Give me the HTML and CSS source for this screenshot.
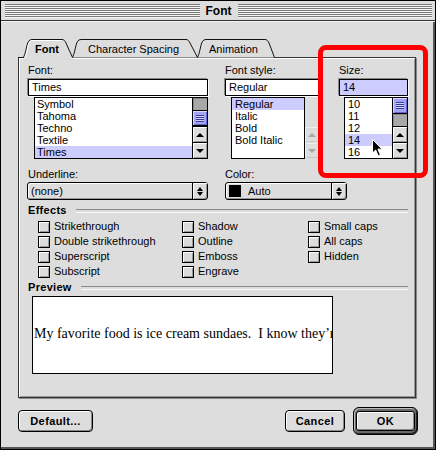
FILE: index.html
```html
<!DOCTYPE html>
<html>
<head>
<meta charset="utf-8">
<title>Font</title>
<link rel="stylesheet" href="styles.css">
</head>
<body>
<div class="window">
  <div class="titlebar">
    <div class="stripes"></div>
    <div class="title">Font</div>
    <div class="stripes"></div>
  </div>

  <div class="tabs">
    <svg class="tab-shapes" width="262" height="21" viewBox="0 0 262 21">
      <path class="tab-fill" d="M179.5,18.5 C183.5,10 182,0.5 188,0.5 L247,0.5 C249,0.5 250,2 251,4 L256.5,18.5 Z"/>
      <path class="tab-line" d="M179.5,18.5 C183.5,10 182,0.5 188,0.5 L247,0.5 C249,0.5 250,2 251,4 L256.5,18.5"/>
      <path class="tab-fill" d="M54.5,18.5 C58.5,10 57,0.5 63,0.5 L168,0.5 C170,0.5 171,2 172,4 L179.5,18.5 Z"/>
      <path class="tab-line" d="M54.5,18.5 C58.5,10 57,0.5 63,0.5 L168,0.5 C170,0.5 171,2 172,4 L179.5,18.5"/>
      <path class="tab-fill" d="M5.5,19.5 L5.5,18.5 C9.5,10 8,0.5 14,0.5 L44,0.5 C46,0.5 47,2 48,4 L54.5,18.5 L54.5,20 L5.5,20 Z"/>
      <path class="tab-line" d="M0,18.5 L5.5,18.5 C9.5,10 8,0.5 14,0.5 L44,0.5 C46,0.5 47,2 48,4 L54.5,18.5"/>
      <path class="tab-hi" d="M7,18.5 C10.5,10 9.5,1.5 14,1.5 L43.5,1.5"/>
    </svg>
    <span class="tab-label t-font">Font</span>
    <span class="tab-label t-char">Character Spacing</span>
    <span class="tab-label t-anim">Animation</span>
  </div>

  <div class="panel">
    <div class="top-row">
      <div class="col col-font">
        <div class="label">Font:</div>
        <div class="field">Times</div>
        <div class="list list-font">
          <div class="items">
            <div class="item">Symbol</div>
            <div class="item">Tahoma</div>
            <div class="item">Techno</div>
            <div class="item">Textile</div>
            <div class="item sel">Times</div>
          </div>
          <div class="scroll">
            <div class="track t12"></div>
            <div class="thumb"><span class="grip"></span></div>
            <div class="arrow up"><span class="tri-up"></span></div>
            <div class="arrow down"><span class="tri-down"></span></div>
          </div>
        </div>
      </div>

      <div class="col col-style">
        <div class="label">Font style:</div>
        <div class="field">Regular</div>
        <div class="list list-style">
          <div class="items">
            <div class="item sel">Regular</div>
            <div class="item">Italic</div>
            <div class="item">Bold</div>
            <div class="item">Bold Italic</div>
          </div>
          <div class="scroll disabled">
            <div class="track t28"></div>
            <div class="arrow up"><span class="tri-up"></span></div>
            <div class="arrow down"><span class="tri-down"></span></div>
          </div>
        </div>
      </div>

      <div class="col col-size">
        <div class="label">Size:</div>
        <div class="field field-sel">14</div>
        <div class="list list-size">
          <div class="items">
            <div class="item">10</div>
            <div class="item">11</div>
            <div class="item">12</div>
            <div class="item sel">14</div>
            <div class="item">16</div>
          </div>
          <div class="scroll">
            <div class="thumb"><span class="grip"></span></div>
            <div class="track t12"></div>
            <div class="arrow up"><span class="tri-up"></span></div>
            <div class="arrow down"><span class="tri-down"></span></div>
          </div>
          <svg class="cursor" width="12" height="18" viewBox="0 0 12 18">
            <path d="M0.5,0.5 L0.5,14 L3.7,11 L6.2,16.8 L8.4,15.8 L5.9,10.2 L10,10.2 Z" fill="#000" stroke="#fff" stroke-width="1"/>
          </svg>
        </div>
      </div>
    </div>

    <div class="mid-row">
      <div class="col col-font">
        <div class="label">Underline:</div>
        <div class="popup popup-under">
          <span class="popup-text">(none)</span>
          <span class="popup-arrows"><span class="pa-up"></span><span class="pa-down"></span></span>
        </div>
      </div>
      <div class="col col-color">
        <div class="label">Color:</div>
        <div class="popup popup-color">
          <span class="swatch"></span>
          <span class="popup-text">Auto</span>
          <span class="popup-arrows"><span class="pa-up"></span><span class="pa-down"></span></span>
        </div>
      </div>
    </div>

    <div class="group-head">Effects</div>
    <div class="checks">
      <div class="check"><span class="box"></span>Strikethrough</div>
      <div class="check"><span class="box"></span>Double strikethrough</div>
      <div class="check"><span class="box"></span>Superscript</div>
      <div class="check"><span class="box"></span>Subscript</div>
      <div class="check"><span class="box"></span>Shadow</div>
      <div class="check"><span class="box"></span>Outline</div>
      <div class="check"><span class="box"></span>Emboss</div>
      <div class="check"><span class="box"></span>Engrave</div>
      <div class="check"><span class="box"></span>Small caps</div>
      <div class="check"><span class="box"></span>All caps</div>
      <div class="check"><span class="box"></span>Hidden</div>
    </div>

    <div class="group-head">Preview</div>
    <div class="preview">
      <span class="preview-text">My favorite food is ice cream sundaes.&nbsp; I know they’re</span>
    </div>
  </div>

  <div class="buttons">
    <div class="btn btn-default">Default...</div>
    <div class="spacer"></div>
    <div class="btn btn-cancel">Cancel</div>
    <div class="ok-ring"><div class="btn btn-ok">OK</div></div>
  </div>

  <div class="highlight-box"></div>
</div>
</body>
</html>
```

FILE: styles.css
```css
* { box-sizing: border-box; }
html, body { margin: 0; padding: 0; background: #ffffff; }
body {
  font-family: "Liberation Sans", Arial, sans-serif;
  font-size: 11px;
  color: #000;
}

.window {
  position: relative;
  width: 436px;
  height: 450px;
  border: 1px solid #000;
  background: #dddddd;
  overflow: hidden;
  box-shadow: inset -2px -2px 0 #555;
}

/* title bar */
.titlebar {
  display: flex;
  height: 20px;
  padding: 3px 3px 2px 4px;
  border-bottom: 1px solid #333;
  box-shadow: 0 1px 0 #f4f4f4;
  background: #dddddd;
}
.stripes {
  flex: 1;
  background: repeating-linear-gradient(to bottom, #7a7a7a 0 1px, #f6f6f6 1px 2px);
  border-bottom: 1px solid #f6f6f6;
}
.title {
  width: 38px;
  text-align: center;
  font-weight: bold;
  font-size: 12px;
  line-height: 14px;
}

/* tabs */
.tabs {
  position: relative;
  display: flex;
  height: 18px;
  margin: 18px 0 0 17px;
}
.tab-shapes {
  position: absolute;
  left: 0;
  top: 0;
  overflow: visible;
  z-index: 1;
}
.tab-fill { fill: #dddddd; stroke: none; }
.tab-line { fill: none; stroke: #111; stroke-width: 1; }
.tab-hi { fill: none; stroke: #fff; stroke-width: 1; }
.tab-label {
  position: relative;
  z-index: 2;
  line-height: 18px;
  padding-top: 1px;
  white-space: nowrap;
}
.t-font { width: 70px; padding-left: 17px; font-weight: bold; }
.t-char { width: 121px; }
.t-anim { width: 70px; }

/* panel */
.panel {
  width: 398px;
  height: 341px;
  margin-left: 17px;
  border: 1px solid #333;
  box-shadow: inset 1px 1px 0 #fff, inset -1px -1px 0 #999, 1px 1px 0 #888;
  padding: 6px 7px 0 9px;
}

.top-row, .mid-row { display: flex; }
.col { display: flex; flex-direction: column; }
.col-font { width: 180px; }
.col-style { width: 95px; margin-left: 17px; }
.col-size { width: 69px; margin-left: 19px; }
.col-color { width: 122px; margin-left: 17px; }

.label {
  line-height: 13px;
  height: 13px;
  margin-bottom: 2px;
  white-space: nowrap;
}

.field {
  height: 17px;
  border: 1px solid #000;
  background: #fff;
  padding: 0 3px;
  line-height: 15px;
  box-shadow: -1px -1px 0 #888, 1px 1px 0 #fff;
}
.field-sel { background: #ccccff; }

.list {
  position: relative;
  display: flex;
  height: 62px;
  margin-top: 1px;
}
.list-font { margin-left: 6px; }
.list-style { margin-left: 6px; }
.list-size { margin-left: 5px; }

.items {
  flex: 1;
  border: 1px solid #000;
  background: #fff;
  overflow: hidden;
}
.item {
  height: 12px;
  line-height: 12px;
  padding-left: 2px;
  white-space: nowrap;
}
.list-style .item, .list-size .item { padding-left: 3px; }
.item.sel { background: #ccccff; }

.scroll {
  width: 15px;
  border: 1px solid #000;
  border-left: none;
  display: flex;
  flex-direction: column;
  background: #aaaaaa;
}
.track { background: #a8a8a8; box-shadow: inset 1px 1px 0 #888; }
.t12 { height: 12px; }
.t28 { height: 28px; }
.thumb {
  height: 16px;
  background: #a3a3f5;
  border-top: 1px solid #000;
  border-bottom: 1px solid #000;
  box-shadow: inset 1px 1px 0 #d8d8ff, inset -1px -1px 0 #6666cc;
  display: flex;
  align-items: center;
  justify-content: center;
}
.list-size .thumb { border-top: none; }
.grip {
  width: 8px;
  height: 7px;
  background: repeating-linear-gradient(to bottom, #3a3a9a 0 1px, #d0d0ff 1px 2px);
}
.arrow {
  height: 16px;
  background: #dddddd;
  border-top: 1px solid #000;
  box-shadow: inset 1px 1px 0 #fff, inset -1px -1px 0 #999;
  display: flex;
  align-items: center;
  justify-content: center;
}
.tri-up {
  width: 0; height: 0;
  border-left: 4px solid transparent;
  border-right: 4px solid transparent;
  border-bottom: 4px solid #000;
}
.tri-down {
  width: 0; height: 0;
  border-left: 4px solid transparent;
  border-right: 4px solid transparent;
  border-top: 4px solid #000;
}
.scroll.disabled {
  background: #dddddd;
  border-color: #dddddd;
}
.scroll.disabled .track { background: #dddddd; box-shadow: none; }
.scroll.disabled .arrow { border-top: 1px solid #dddddd; box-shadow: inset 1px 1px 0 #eee, inset -1px -1px 0 #c8c8c8; }
.scroll.disabled .tri-up { border-bottom-color: #a8a8a8; }
.scroll.disabled .tri-down { border-top-color: #a8a8a8; }

.cursor {
  position: absolute;
  left: 28px;
  top: 42px;
}

/* mid row */
.mid-row { margin-top: 9px; }
.mid-row .label { margin-bottom: 1px; }
.popup {
  display: flex;
  align-items: center;
  height: 18px;
  border: 1px solid #000;
  border-radius: 3px;
  background: #dddddd;
  box-shadow: inset 1px 1px 0 #fff, inset -1px -1px 0 #999;
}
.popup-under { width: 181px; margin-left: -1px; }
.popup-text { flex: 1; padding-left: 3px; line-height: 16px; white-space: nowrap; }
.popup-arrows {
  width: 15px;
  height: 16px;
  border-left: 1px solid #000;
  display: flex;
  flex-direction: column;
  align-items: center;
  justify-content: center;
  gap: 1px;
  box-shadow: inset 1px 1px 0 #fff;
}
.pa-up {
  width: 0; height: 0;
  border-left: 3.5px solid transparent;
  border-right: 3.5px solid transparent;
  border-bottom: 4px solid #000;
}
.pa-down {
  width: 0; height: 0;
  border-left: 3.5px solid transparent;
  border-right: 3.5px solid transparent;
  border-top: 4px solid #000;
}
.swatch {
  width: 12px;
  height: 12px;
  background: #000;
  margin-left: 3px;
}
.popup-color .popup-text { padding-left: 7px; }

/* groups */
.group-head {
  display: flex;
  align-items: center;
  height: 13px;
  line-height: 13px;
  margin-top: 4px;
  font-weight: bold;
  letter-spacing: 0.3px;
  white-space: nowrap;
}
.group-head::after {
  content: "";
  flex: 1;
  height: 2px;
  margin-left: 9px;
  border-top: 1px solid #8a8a8a;
  border-bottom: 1px solid #fafafa;
}
.checks {
  display: grid;
  grid-template-columns: 144px 126px 1fr;
  grid-template-rows: repeat(4, 15px);
  grid-auto-flow: column;
  margin: 2px 0 0 10px;
}
.check {
  display: flex;
  align-items: center;
  white-space: nowrap;
  line-height: 15px;
}
.box {
  width: 12px;
  height: 12px;
  margin-right: 4px;
  border: 1px solid #000;
  background: #dcdcdc;
  box-shadow: inset 1px 1px 0 #fff, inset -1px -1px 0 #999;
}
.checks + .group-head { margin-top: 2px; }

.preview {
  display: flex;
  align-items: center;
  width: 301px;
  height: 78px;
  margin: 2px 0 0 4px;
  border: 1px solid #000;
  background: #fff;
  overflow: hidden;
}
.preview-text {
  font-family: "Liberation Serif", "Times New Roman", serif;
  font-size: 14px;
  white-space: nowrap;
  padding-left: 1px;
  margin-top: -2px;
}

/* buttons */
.buttons {
  display: flex;
  align-items: center;
  height: 28px;
  margin: 9px 0 0 17px;
  width: 400px;
}
.spacer { flex: 1; }
.btn {
  height: 22px;
  border: 1px solid #000;
  border-radius: 4px;
  background: #dddddd;
  box-shadow: inset 1px 1px 0 #fff, inset -1px -1px 0 #888;
  font-weight: bold;
  text-align: center;
  line-height: 20px;
  letter-spacing: 0.4px;
}
.btn-default { width: 75px; }
.btn-cancel { width: 60px; margin-right: 8px; }
.ok-ring {
  width: 65px;
  height: 28px;
  border: 1px solid #000;
  border-radius: 6px;
  background: #6a6a6a;
  box-shadow: inset 1px 1px 0 #bbb, inset -1px -1px 0 #222;
  padding: 2px 2px;
  display: flex;
  align-items: center;
}
.btn-ok { width: 100%; height: 20px; line-height: 18px; border-radius: 3px; }

/* annotation */
.highlight-box {
  position: absolute;
  left: 317px;
  top: 44px;
  width: 110px;
  height: 133px;
  border: 5px solid #ff0000;
  border-radius: 8px;
  z-index: 5;
}
```
